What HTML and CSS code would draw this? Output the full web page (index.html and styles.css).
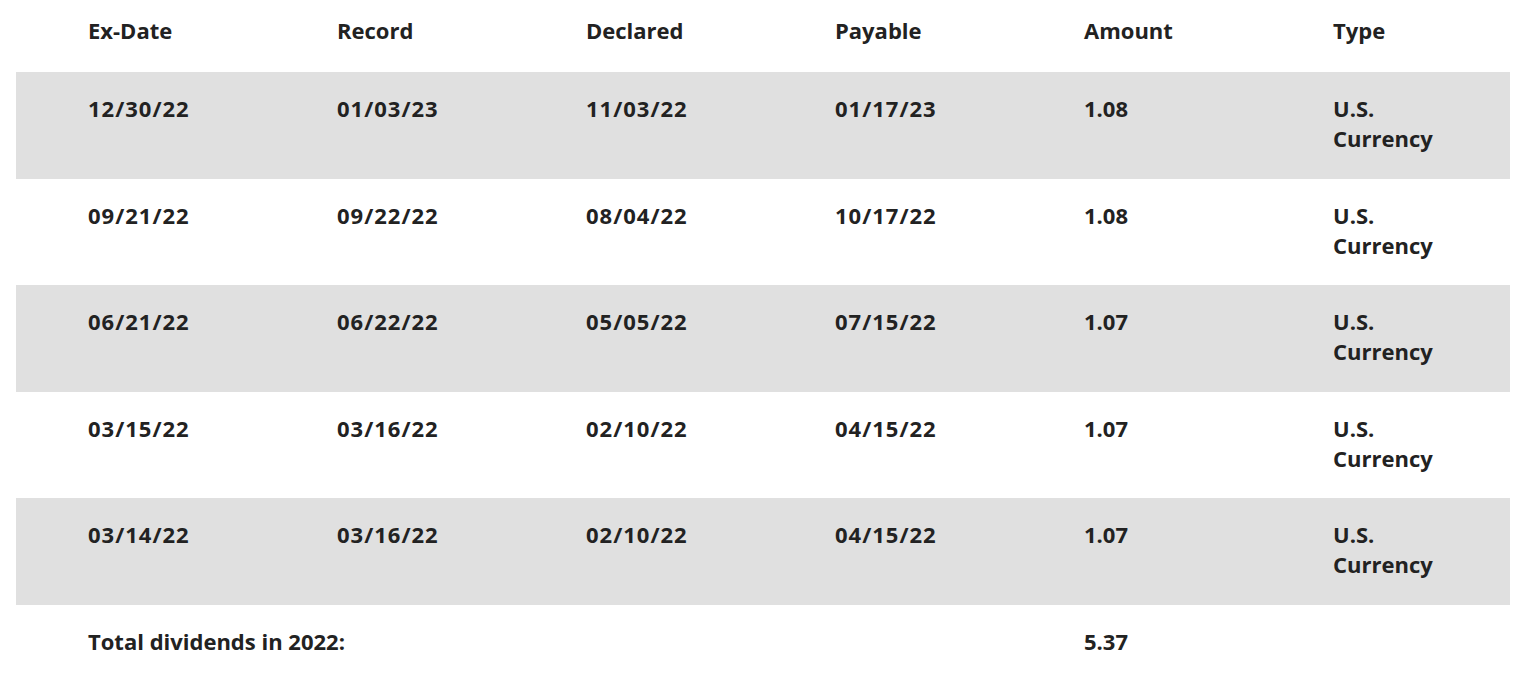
FILE: index.html
```html
<!DOCTYPE html>
<html lang="en">
<head>
<meta charset="utf-8">
<title>Dividends</title>
<link rel="stylesheet" href="styles.css">
</head>
<body>
<div class="wrap">
<table class="div-table">
  <thead>
    <tr class="head-row">
      <th>Ex-Date</th><th>Record</th><th>Declared</th><th>Payable</th><th>Amount</th><th>Type</th>
    </tr>
  </thead>
  <tbody>
    <tr class="shade"><td class="date">12/30/22</td><td class="date">01/03/23</td><td class="date">11/03/22</td><td class="date">01/17/23</td><td>1.08</td><td>U.S.<br>Currency</td></tr>
    <tr><td class="date">09/21/22</td><td class="date">09/22/22</td><td class="date">08/04/22</td><td class="date">10/17/22</td><td>1.08</td><td>U.S.<br>Currency</td></tr>
    <tr class="shade"><td class="date">06/21/22</td><td class="date">06/22/22</td><td class="date">05/05/22</td><td class="date">07/15/22</td><td>1.07</td><td>U.S.<br>Currency</td></tr>
    <tr><td class="date">03/15/22</td><td class="date">03/16/22</td><td class="date">02/10/22</td><td class="date">04/15/22</td><td>1.07</td><td>U.S.<br>Currency</td></tr>
    <tr class="shade"><td class="date">03/14/22</td><td class="date">03/16/22</td><td class="date">02/10/22</td><td class="date">04/15/22</td><td>1.07</td><td>U.S.<br>Currency</td></tr>
    <tr class="total-row"><td colspan="4">Total dividends in 2022:</td><td>5.37</td><td></td></tr>
  </tbody>
</table>
</div>
</body>
</html>
```
FILE: styles.css
```css
html, body {
  margin: 0;
  padding: 0;
  background: #ffffff;
}
body {
  font-family: "Open Sans", "Liberation Sans", sans-serif;
  font-weight: 700;
  font-size: 22px;
  color: #222222;
}
.wrap {
  padding: 0 15px 0 16px;
}
.div-table {
  width: 100%;
  border-collapse: collapse;
  table-layout: fixed;
}
.div-table th,
.div-table td {
  text-align: left;
  vertical-align: top;
  padding: 21.25px 0 25.25px 72px;
  line-height: 30px;
  font-weight: 700;
}
.div-table .head-row th {
  padding-top: 15px;
  padding-bottom: 27px;
}
.div-table td.date {
  letter-spacing: 1px;
}
.shade {
  background: #e0e0e0;
}
```
